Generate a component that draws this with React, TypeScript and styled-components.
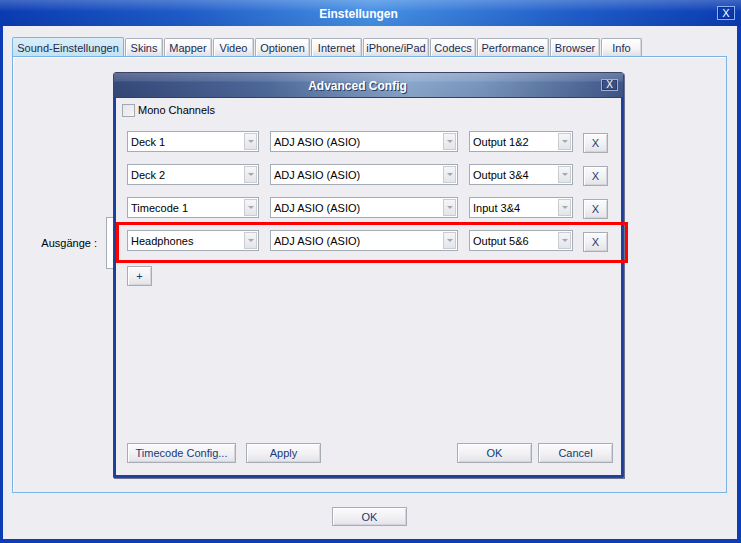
import styled, { createGlobalStyle } from "styled-components";

const GlobalStyle = createGlobalStyle`
  html, body {
    margin: 0;
    padding: 0;
    background: #eeedf2;
  }
  body {
    font-family: "Liberation Sans", Arial, sans-serif;
    font-size: 11px;
    color: #000;
  }
  * {
    box-sizing: border-box;
  }
`

const Window = styled.div`
  position: relative;
  width: 741px;
  height: 543px;
  display: flex;
  flex-direction: column;
  background: #eeedf2;
  overflow: hidden;
`

const TitleBar = styled.div`
  height: 26px;
  display: flex;
  align-items: center;
  background:
    linear-gradient(to bottom, rgba(255,255,255,.22) 0, rgba(255,255,255,.08) 30%, rgba(0,0,0,0) 45%, rgba(0,0,0,.05) 100%),
    linear-gradient(to right, #0a3bb2 0%, #1f5cc8 25%, #4690e4 50%, #1f5cc8 78%, #0a3bb2 100%);
`

const Title = styled.div`
  flex: 1;
  text-align: center;
  color: #fff;
  font-weight: bold;
  font-size: 12px;
  padding-top: 2px;
`

const CloseBox = styled.div<{ $small?: boolean }>`
  width: ${p => p.$small ? 17 : 18}px;
  height: ${p => p.$small ? 12 : 14}px;
  margin-right: ${p => p.$small ? 5 : 6}px;
  display: flex;
  align-items: center;
  justify-content: center;
  color: #fff;
  font-size: ${p => p.$small ? 10 : 11}px;
  line-height: 1;
  border: 1px solid ${p => p.$small ? "#9fb1cf" : "#8cb4f0"};
  background: ${p => p.$small ? "rgba(40,60,110,.35)" : "rgba(10,50,170,.5)"};
  box-shadow: inset 0 0 0 1px ${p => p.$small ? "rgba(30,50,100,.6)" : "rgba(0,40,150,.6)"};
`

const Body = styled.div`
  flex: 1;
  display: flex;
  flex-direction: column;
  border: 3px solid #0c3db4;
  border-top: none;
  border-right-width: 4px;
  border-bottom-width: 4px;
  padding: 11px 10px 13px 9px;
`

const Tabs = styled.div`
  height: 19px;
  display: flex;
  align-items: flex-end;
  gap: 1px;
`

const Tab = styled.div<{ $w: number; $active?: boolean }>`
  width: ${p => p.$w}px;
  height: ${p => p.$active ? 19 : 18}px;
  display: flex;
  align-items: center;
  justify-content: center;
  padding-top: 1px;
  color: #1b2c4e;
  font-size: 11px;
  border: 1px solid ${p => p.$active ? "#7db5e2" : "#a9b0ba"};
  border-bottom: none;
  border-radius: 2px 2px 0 0;
  background: ${p => p.$active
    ? "linear-gradient(to bottom, #d9eef9, #c3e2f2)"
    : "linear-gradient(to bottom, #ffffff, #f4f4f6 60%, #dedee4)"};
  box-shadow: ${p => p.$active ? "none" : "inset 1px 0 0 #fff, inset -1px 0 0 #d6d8de"};
`

const Panel = styled.div`
  flex: 1;
  border: 1px solid #79b4e6;
  box-shadow: inset 1px 1px 0 #fff;
  padding-top: 160px;
`

const FieldRow = styled.div`
  display: flex;
  align-items: center;
  gap: 9px;
`

const FieldLabel = styled.div`
  width: 84px;
  text-align: right;
`

const HiddenBox = styled.div`
  width: 300px;
  height: 52px;
  background: #fff;
  border: 1px solid #a5acb5;
`

const Footer = styled.div`
  display: flex;
  justify-content: center;
  padding-top: 14px;
`

const Button = styled.div<{ $w: number; $h?: number }>`
  width: ${p => p.$w}px;
  height: ${p => p.$h ?? 20}px;
  display: flex;
  align-items: center;
  justify-content: center;
  color: #163a72;
  font-size: 11px;
  border: 1px solid #a8adb4;
  background: linear-gradient(to bottom, #fbfbfd 0%, #f1f1f4 55%, #e2e2e8 100%);
  box-shadow: inset 1px 1px 0 #fff, inset -1px -1px 0 #d4d5dc;
`

const Dialog = styled.div`
  position: absolute;
  left: 113px;
  top: 72px;
  width: 511px;
  height: 406px;
  display: flex;
  flex-direction: column;
  border: 1px solid #3a4466;
  border-radius: 3px 3px 0 0;
  box-shadow: 1px 1px 0 #6a7390;
`

const DialogTitleBar = styled.div`
  height: 24px;
  display: flex;
  align-items: center;
  background:
    linear-gradient(to bottom, rgba(255,255,255,.22) 0, rgba(255,255,255,.12) 32%, rgba(0,0,0,0) 38%, rgba(0,0,0,.04) 100%),
    linear-gradient(to right, #35497a 0%, #4e6899 30%, #8aa7cb 58%, #7995bd 72%, #3f5689 100%);
`

const DialogTitle = styled.div`
  flex: 1;
  text-align: center;
  color: #fff;
  font-weight: bold;
  font-size: 12px;
  padding-top: 2px;
  text-shadow: 1px 1px 0 #2b3b63;
`

const Client = styled.div`
  flex: 1;
  display: flex;
  flex-direction: column;
  background: #eeedf2;
  border: 2px solid #1f3f9c;
  border-top: 1px solid #1f3f9c;
  padding: 5px 8px 12px 6px;
`

const CheckRow = styled.label`
  display: flex;
  align-items: center;
  gap: 3px;
  height: 14px;
`

const CheckBox = styled.span`
  width: 13px;
  height: 13px;
  border: 1px solid #a3a9b2;
  background: linear-gradient(to bottom right, #e4e4ea, #f7f7f9);
`

const Rows = styled.div`
  display: flex;
  flex-direction: column;
  gap: 11px;
  margin: 14px 0 0 5px;
`

const Row = styled.div`
  display: grid;
  grid-template-columns: 132px 188px 104px 25px;
  column-gap: 11px;
  align-items: start;
`

const Combo = styled.div`
  height: 21px;
  display: flex;
  align-items: center;
  justify-content: space-between;
  background: #fff;
  border: 1px solid #a5acb5;
  padding: 1px 1px 1px 3px;
`

const ComboText = styled.span`
  white-space: nowrap;
`

const ComboArrow = styled.span`
  width: 13px;
  height: 17px;
  display: flex;
  align-items: center;
  justify-content: center;
  border: 1px solid #c8ccd3;
  background: linear-gradient(to bottom, #f6f6f8, #e4e5ea);

  &::after {
    content: "";
    border-left: 3px solid transparent;
    border-right: 3px solid transparent;
    border-top: 3px solid #a3a7b0;
  }
`

const RemoveButton = styled(Button)`
  margin-top: 2px;
  margin-left: -1px;
`

const AddRow = styled.div`
  margin: 14px 0 0 5px;
`

const BottomBar = styled.div`
  margin-top: auto;
  margin-left: 5px;
  display: flex;
  align-items: center;
`

const Group = styled.div<{ $gap: number }>`
  display: flex;
  gap: ${p => p.$gap}px;
`

const Spacer = styled.div`
  flex: 1;
`

const Highlight = styled.div`
  position: absolute;
  left: 116px;
  top: 222px;
  width: 512px;
  height: 41px;
  border: 3px solid #ff0000;
  pointer-events: none;
`

const tabs: [string, number][] = [
  ["Sound-Einstellungen", 112],
  ["Skins", 38],
  ["Mapper", 48],
  ["Video", 41],
  ["Optionen", 55],
  ["Internet", 51],
  ["iPhone/iPad", 66],
  ["Codecs", 46],
  ["Performance", 72],
  ["Browser", 50],
  ["Info", 41],
]

const channels = [
  { name: "Deck 1", device: "ADJ ASIO (ASIO)", port: "Output 1&2" },
  { name: "Deck 2", device: "ADJ ASIO (ASIO)", port: "Output 3&4" },
  { name: "Timecode 1", device: "ADJ ASIO (ASIO)", port: "Input 3&4" },
  { name: "Headphones", device: "ADJ ASIO (ASIO)", port: "Output 5&6" },
]

const Select = ({ value }: { value: string }) => (
  <Combo>
    <ComboText>{value}</ComboText>
    <ComboArrow />
  </Combo>
)

export default function App() {
  return (
    <>
      <GlobalStyle />
      <Window>
        <TitleBar>
          <Title>Einstellungen</Title>
          <CloseBox>X</CloseBox>
        </TitleBar>

        <Body>
          <Tabs>
            {tabs.map(([label, w], i) => (
              <Tab key={label} $w={w} $active={i === 0}>{label}</Tab>
            ))}
          </Tabs>

          <Panel>
            <FieldRow>
              <FieldLabel>Ausgänge :</FieldLabel>
              <HiddenBox />
            </FieldRow>
          </Panel>

          <Footer>
            <Button $w={75} $h={19}>OK</Button>
          </Footer>
        </Body>

        <Dialog>
          <DialogTitleBar>
            <DialogTitle>Advanced Config</DialogTitle>
            <CloseBox $small>X</CloseBox>
          </DialogTitleBar>

          <Client>
            <CheckRow>
              <CheckBox />
              Mono Channels
            </CheckRow>

            <Rows>
              {channels.map(c => (
                <Row key={c.name}>
                  <Select value={c.name} />
                  <Select value={c.device} />
                  <Select value={c.port} />
                  <RemoveButton $w={25}>X</RemoveButton>
                </Row>
              ))}
            </Rows>

            <AddRow>
              <Button $w={25}>+</Button>
            </AddRow>

            <BottomBar>
              <Group $gap={10}>
                <Button $w={109}>Timecode Config...</Button>
                <Button $w={75}>Apply</Button>
              </Group>
              <Spacer />
              <Group $gap={6}>
                <Button $w={75}>OK</Button>
                <Button $w={75}>Cancel</Button>
              </Group>
            </BottomBar>
          </Client>
        </Dialog>

        <Highlight />
      </Window>
    </>
  )
}
